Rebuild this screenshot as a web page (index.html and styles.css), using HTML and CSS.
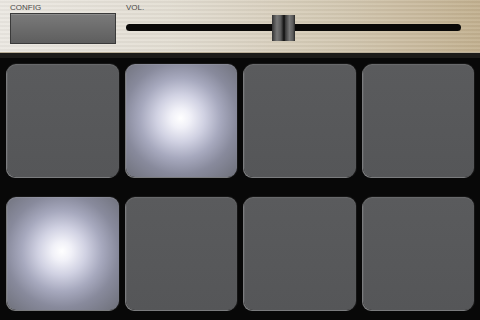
FILE: index.html
```html
<!DOCTYPE html>
<html>
<head>
<meta charset="utf-8">
<link rel="stylesheet" href="styles.css">
</head>
<body>
<div class="app">
  <header class="topbar">
    <div class="config">
      <div class="label">CONFIG</div>
      <div class="config-btn"></div>
    </div>
    <div class="vol">
      <div class="label">VOL.</div>
      <div class="track">
        <div class="thumb"><span></span><span></span></div>
      </div>
    </div>
  </header>
  <div class="divider"></div>
  <main class="pads">
    <div class="pad"></div>
    <div class="pad lit"></div>
    <div class="pad"></div>
    <div class="pad"></div>
    <div class="pad lit"></div>
    <div class="pad"></div>
    <div class="pad"></div>
    <div class="pad"></div>
  </main>
</div>
</body>
</html>
```
FILE: styles.css
```css
html, body {
  margin: 0;
  padding: 0;
  background: #080808;
  width: 480px;
  height: 320px;
  overflow: hidden;
  font-family: "Liberation Sans", Arial, sans-serif;
}
.app {
  width: 480px;
  height: 320px;
  display: flex;
  flex-direction: column;
}
.topbar {
  height: 53px;
  box-sizing: border-box;
  padding: 4px 0 0 10px;
  display: flex;
  gap: 10px;
  background:
    repeating-linear-gradient(180deg, rgba(255,255,255,0.08) 0 1px, rgba(0,0,0,0.03) 1px 3px, rgba(255,255,255,0.05) 3px 4px),
    linear-gradient(90deg, #ebe8e2 0%, #e3ded3 35%, #d3c8b2 70%, #c2b08f 100%);
  border-bottom: 1px solid #b9ae98;
}
.label {
  font-size: 8px;
  line-height: 8px;
  color: #4a4948;
  -webkit-font-smoothing: antialiased;
}
.config-btn {
  margin-top: 1px;
  width: 104px;
  height: 29px;
  border: 1px solid #3a3a3a;
  background: linear-gradient(180deg, #7a7a7a 0%, #6c6c6c 50%, #5e5e5e 100%);
  box-shadow: inset 0 1px 0 rgba(255,255,255,0.15);
}
.vol {
  flex: 1;
  padding-right: 19px;
}
.track {
  position: relative;
  margin-top: 12px;
  height: 7px;
  border-radius: 4px;
  background: #0a0908;
}
.thumb {
  position: absolute;
  left: 146px;
  top: -9px;
  width: 23px;
  height: 26px;
  display: flex;
  gap: 2px;
  background: #1a1a1a;
}
.thumb span {
  flex: 1;
  background: linear-gradient(90deg, #333 0%, #777 45%, #5a5a5a 80%, #262626 100%);
}
.divider {
  height: 5px;
  background: #1c1b19;
}
.pads {
  flex: 1;
  display: grid;
  grid-template-columns: repeat(4, 111.5px);
  grid-template-rows: repeat(2, 113px);
  column-gap: 7px;
  row-gap: 20px;
  padding: 6px 0 0 7px;
}
.pad {
  border-radius: 9px;
  background: linear-gradient(180deg, #5a5b5d 0%, #555658 100%);
  box-shadow:
    inset 0 1px 1px rgba(255,255,255,0.10),
    inset 1px 0 1px rgba(255,255,255,0.06),
    -1px 1px 0 #7a7b7d,
    0 0 0 1px #151515;
}
.pad.lit {
  background: radial-gradient(circle 80px at 49% 48%, #ffffff 0%, #f1f1f8 12%, #d0d1e2 30%, #a7a9be 50%, #888a9c 70%, #6f717b 100%);
}
```
